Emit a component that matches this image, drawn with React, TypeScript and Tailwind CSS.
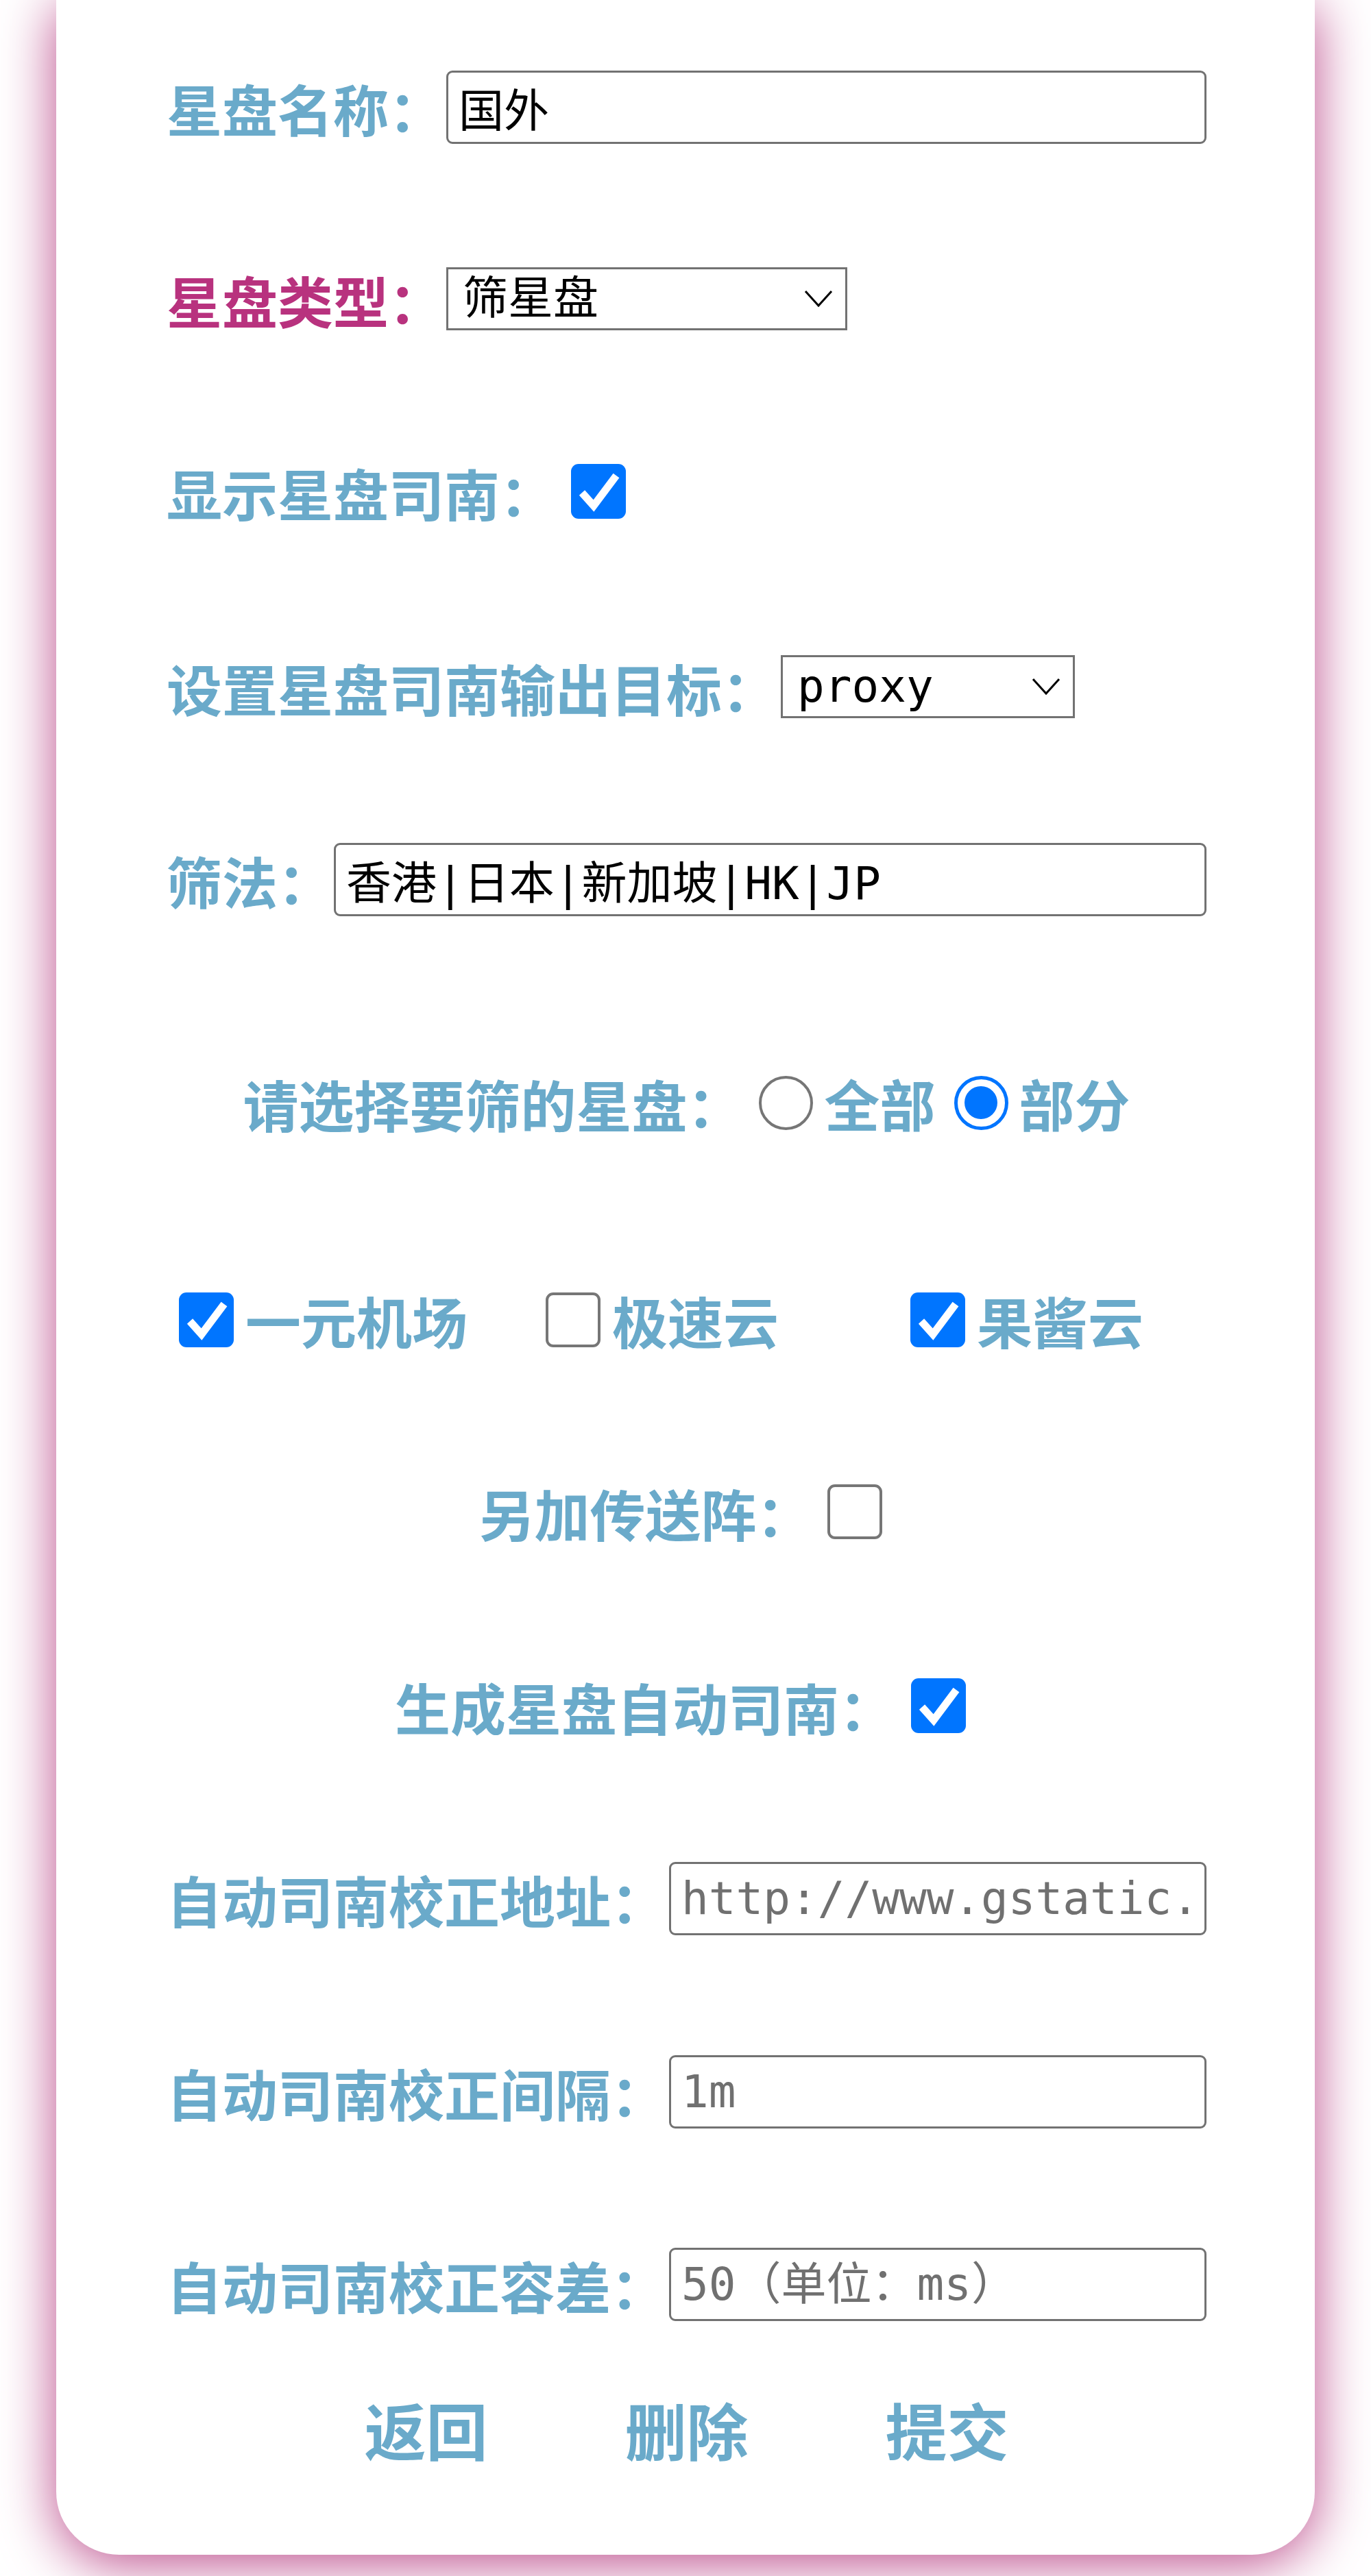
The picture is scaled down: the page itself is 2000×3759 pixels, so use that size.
const BLUE = "text-[#6aaaca]";

const Label = ({ text, pink }: { text: string; pink?: boolean }): JSX.Element => (
  <span
    className={`shrink-0 whitespace-nowrap font-['Noto_Sans_CJK_SC',sans-serif] text-[81px] font-bold leading-none ${
      pink ? "text-[#b8327e]" : BLUE
    }`}
  >
    {text}
  </span>
);

const CheckBox = ({ checked }: { checked?: boolean }): JSX.Element =>
  checked ? (
    <span className="flex h-[80px] w-[80px] shrink-0 items-center justify-center rounded-[11px] bg-[#0075ff]">
      <svg viewBox="0 0 80 80" className="h-[80px] w-[80px]">
        <polyline points="16,42 33,61 66,17" fill="none" stroke="white" strokeWidth="11" strokeLinejoin="miter" />
      </svg>
    </span>
  ) : (
    <span className="block h-[80px] w-[80px] shrink-0 rounded-[11px] border-[4px] border-[#767676] bg-white" />
  );

const Radio = ({ checked }: { checked?: boolean }): JSX.Element =>
  checked ? (
    <span className="flex h-[79px] w-[79px] shrink-0 items-center justify-center rounded-full border-[5px] border-[#0075ff] bg-white">
      <span className="block h-[48px] w-[48px] rounded-full bg-[#0075ff]" />
    </span>
  ) : (
    <span className="block h-[79px] w-[79px] shrink-0 rounded-full border-[4px] border-[#767676] bg-white" />
  );

const Chevron = (): JSX.Element => (
  <svg viewBox="0 0 42 26" className="h-[26px] w-[42px] shrink-0">
    <polyline points="2,2 21,23 40,2" fill="none" stroke="black" strokeWidth="3" />
  </svg>
);

const mono = "font-['DejaVu_Sans_Mono','Noto_Sans_CJK_SC',monospace]";

const TextInput = ({ value, placeholder, ml }: { value?: string; placeholder?: string; ml: string }): JSX.Element => (
  <input
    readOnly
    value={value ?? ""}
    placeholder={placeholder}
    className={`${ml} ${mono} h-[107px] min-w-0 flex-1 rounded-[9px] border-[3px] border-[#727272] bg-white pl-[15px] pr-[8px] text-[66px] leading-none text-black outline-none placeholder:text-[#707070]`}
  />
);

const Select = ({ value, width, ml }: { value: string; width: string; ml: string }): JSX.Element => (
  <div
    className={`${ml} ${width} ${mono} flex h-[92px] shrink-0 items-center justify-between border-[3px] border-[#727272] bg-white pl-[21px] pr-[18px] text-[66px] leading-none text-black`}
  >
    <span>{value}</span>
    <Chevron />
  </div>
);

const Row = ({ mt, children, center }: { mt: string; children: React.ReactNode; center?: boolean }): JSX.Element => (
  <div className={`${mt} flex h-[108px] items-center ${center ? "justify-center" : ""}`}>{children}</div>
);

const Option = ({ text, checked }: { text: string; checked?: boolean }): JSX.Element => (
  <div className="flex items-center">
    <CheckBox checked={checked} />
    <span className="ml-[17px]">
      <Label text={text} />
    </span>
  </div>
);

export default function App(): JSX.Element {
  return (
    <div className="min-h-[3759px] overflow-hidden bg-white">
      <div className="mx-[82px] rounded-b-[92px] bg-white pb-[130px] pl-[161px] pr-[158px] pt-[102px] shadow-[0_12px_80px_#bb4a8a]">
        <Row mt="mt-0">
          <Label text="星盘名称：" />
          <TextInput value="国外" ml="ml-[3px]" />
        </Row>

        <Row mt="mt-[172px]">
          <Label text="星盘类型：" pink />
          <Select value="筛星盘" width="w-[585px]" ml="ml-[3px]" />
        </Row>

        <Row mt="mt-[173px]">
          <Label text="显示星盘司南：" />
          <span className="ml-[23px]">
            <CheckBox checked />
          </span>
        </Row>

        <Row mt="mt-[177px]">
          <Label text="设置星盘司南输出目标：" />
          <Select value="proxy" width="w-[429px]" ml="ml-[5px]" />
        </Row>

        <Row mt="mt-[173px]">
          <Label text="筛法：" />
          <TextInput value="香港|日本|新加坡|HK|JP" ml="ml-[1px]" />
        </Row>

        <Row mt="mt-[218px]" center>
          <Label text="请选择要筛的星盘：" />
          <span className="ml-[24px]">
            <Radio />
          </span>
          <span className="ml-[16px]">
            <Label text="全部" />
          </span>
          <span className="ml-[27px]">
            <Radio checked />
          </span>
          <span className="ml-[16px]">
            <Label text="部分" />
          </span>
        </Row>

        <div className="mt-[209px] ml-[18px] grid h-[108px] grid-cols-[535px_532px_auto] items-center">
          <Option text="一元机场" checked />
          <Option text="极速云" />
          <Option text="果酱云" checked />
        </div>

        <Row mt="mt-[172px]" center>
          <Label text="另加传送阵：" />
          <span className="ml-[22px] mr-[18px]">
            <CheckBox />
          </span>
        </Row>

        <Row mt="mt-[175px]" center>
          <Label text="生成星盘自动司南：" />
          <span className="ml-[24px] mr-[18px]">
            <CheckBox checked />
          </span>
        </Row>

        <Row mt="mt-[173px]">
          <Label text="自动司南校正地址：" />
          <TextInput placeholder="http://www.gstatic.com/generate_204" ml="ml-[4px]" />
        </Row>

        <Row mt="mt-[174px]">
          <Label text="自动司南校正间隔：" />
          <TextInput placeholder="1m" ml="ml-[4px]" />
        </Row>

        <Row mt="mt-[173px]">
          <Label text="自动司南校正容差：" />
          <TextInput placeholder="50（单位：ms）" ml="ml-[4px]" />
        </Row>

        <div className="mt-[103px] flex h-[108px] items-center justify-center gap-[200px]">
          {["返回", "删除", "提交"].map((b) => (
            <button
              key={b}
              className={`font-['Noto_Sans_CJK_SC',sans-serif] text-[90px] font-bold leading-none ${BLUE}`}
            >
              {b}
            </button>
          ))}
        </div>
      </div>
    </div>
  );
}
